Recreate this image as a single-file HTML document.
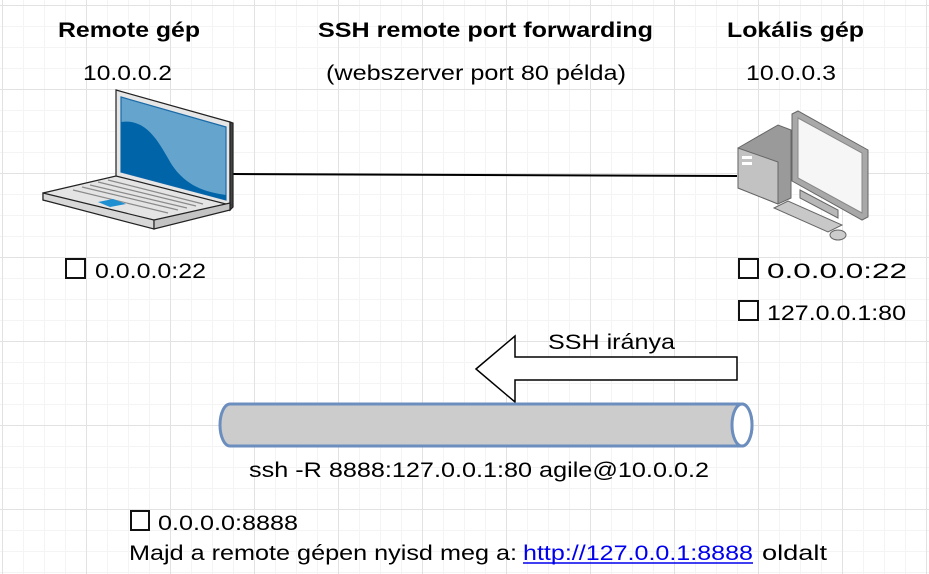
<!DOCTYPE html>
<html><head><meta charset="utf-8"><style>
html,body{margin:0;padding:0;background:#fff;}
svg{display:block;}
text{font-family:"Liberation Sans",Arial,sans-serif;font-size:21px;fill:#000;}
.b{font-weight:bold;}
</style></head><body>
<svg width="929" height="574" viewBox="0 0 929 574" xmlns="http://www.w3.org/2000/svg">
<defs>
<pattern id="minor" width="21" height="21" patternUnits="userSpaceOnUse" x="2" y="5">
<path d="M0 0.5H21M0.5 0V21" stroke="#f4f4f4" stroke-width="1" fill="none"/>
</pattern>
<pattern id="major" width="84" height="84" patternUnits="userSpaceOnUse" x="2" y="5">
<path d="M0 0.5H84M0.5 0V84" stroke="#e2e2e2" stroke-width="1" fill="none"/>
</pattern>
</defs>
<rect width="929" height="574" fill="url(#minor)"/>
<rect width="929" height="574" fill="url(#major)"/>

<line x1="233" y1="174" x2="737" y2="176" stroke="#000" stroke-width="2"/>

<!-- laptop -->
<g stroke="#222" stroke-width="1.2">
<polygon points="116,90 230,122 230,210 116,180" fill="#e6e6e6"/>
<polygon points="230,122 233,123 233,207 230,210" fill="#444"/>
<polygon points="121,97 226,127 226,200 121,172" fill="#65a4cc" stroke="#1a6aa8"/>
<path d="M121,122 C148,118 160,145 172,165 C186,186 205,192 226,195 L226,200 L121,172 Z" fill="#0064a8" stroke="none"/>
<polygon points="43,193 116,176 230,205 154,226 43,200" fill="#e4e4e4"/>
<polygon points="43,193 154,220 154,229 43,200" fill="#d8d8d8"/>
<polygon points="154,220 230,203 230,210 154,229" fill="#c4c4c4"/>
</g>
<g stroke="#8a8a8a" stroke-width="1.2">
<line x1="73" y1="190" x2="168" y2="213"/>
<line x1="82" y1="187" x2="178" y2="210"/>
<line x1="90" y1="185" x2="187" y2="208"/>
<line x1="98" y1="182" x2="196" y2="206"/>
<line x1="108" y1="180" x2="203" y2="204"/>
</g>
<polygon points="98,202 113,199 126,204 110,207" fill="#1e8fd0"/>

<!-- desktop -->
<g stroke="#666" stroke-width="1">
<polygon points="738,148 778,125 791,130 791,198 778,204 738,188" fill="#9a9a9a"/>
<polygon points="738,148 778,162 778,204 738,188" fill="#c2c2c2"/>
<polygon points="792,114 798,111 868,150 868,217 862,220 792,181" fill="#a8a8a8"/>
<polygon points="798,118 862,153 862,213 798,178" fill="#f6f6f6" stroke="#888"/>
<polygon points="800,190 838,210 838,218 800,198" fill="#b8b8b8"/>
<polygon points="774,208 788,201 842,225 828,232" fill="#c8c8c8"/>
<ellipse cx="838" cy="235" rx="8" ry="5" fill="#ccc"/>
</g>
<rect x="742" y="156" width="10" height="3" fill="#fff"/>
<rect x="742" y="162" width="10" height="3" fill="#fff"/>

<text class="b" x="58" y="37" textLength="142" lengthAdjust="spacingAndGlyphs">Remote gép</text>
<text class="b" x="318" y="37" textLength="335" lengthAdjust="spacingAndGlyphs">SSH remote port forwarding</text>
<text class="b" x="727" y="37" textLength="137" lengthAdjust="spacingAndGlyphs">Lokális gép</text>
<text x="83" y="80" textLength="89" lengthAdjust="spacingAndGlyphs">10.0.0.2</text>
<text x="326" y="80" textLength="300" lengthAdjust="spacingAndGlyphs">(webszerver port 80 példa)</text>
<text x="746" y="80" textLength="90" lengthAdjust="spacingAndGlyphs">10.0.0.3</text>

<g fill="none" stroke="#111" stroke-width="2">
<rect x="66" y="259" width="19" height="19"/>
<rect x="739" y="259" width="19" height="19"/>
<rect x="739" y="301" width="19" height="19"/>
<rect x="131" y="511" width="18" height="19"/>
</g>
<text x="95" y="278" textLength="111" lengthAdjust="spacingAndGlyphs">0.0.0.0:22</text>
<text x="767" y="278" textLength="140" lengthAdjust="spacingAndGlyphs">0.0.0.0:22</text>
<text x="767" y="320" textLength="139" lengthAdjust="spacingAndGlyphs">127.0.0.1:80</text>

<polygon points="476,369 515,336 515,357 737,357 737,380 515,380 515,402" fill="#fff" stroke="#000" stroke-width="1.5"/>
<text x="548" y="349" textLength="127" lengthAdjust="spacingAndGlyphs">SSH iránya</text>

<path d="M230,404 L742,404 A10,21 0 0 1 742,446 L230,446 A10,21 0 0 1 230,404 Z" fill="#cccccc" stroke="#6c8ebf" stroke-width="3"/>
<ellipse cx="742" cy="425" rx="10" ry="21" fill="#fff" stroke="#6c8ebf" stroke-width="3"/>

<text x="249" y="477" textLength="460" lengthAdjust="spacingAndGlyphs">ssh -R 8888:127.0.0.1:80 agile@10.0.0.2</text>
<text x="158" y="530" textLength="140" lengthAdjust="spacingAndGlyphs">0.0.0.0:8888</text>
<text x="129" y="560" textLength="388" lengthAdjust="spacingAndGlyphs">Majd a remote gépen nyisd meg a:</text>
<text x="523" y="560" textLength="230" lengthAdjust="spacingAndGlyphs" style="fill:#0000ee">http://127.0.0.1:8888</text>
<line x1="523" y1="563" x2="753" y2="563" stroke="#0000ee" stroke-width="1.5"/>
<text x="762" y="560" textLength="65" lengthAdjust="spacingAndGlyphs">oldalt</text>
</svg>
</body></html>
